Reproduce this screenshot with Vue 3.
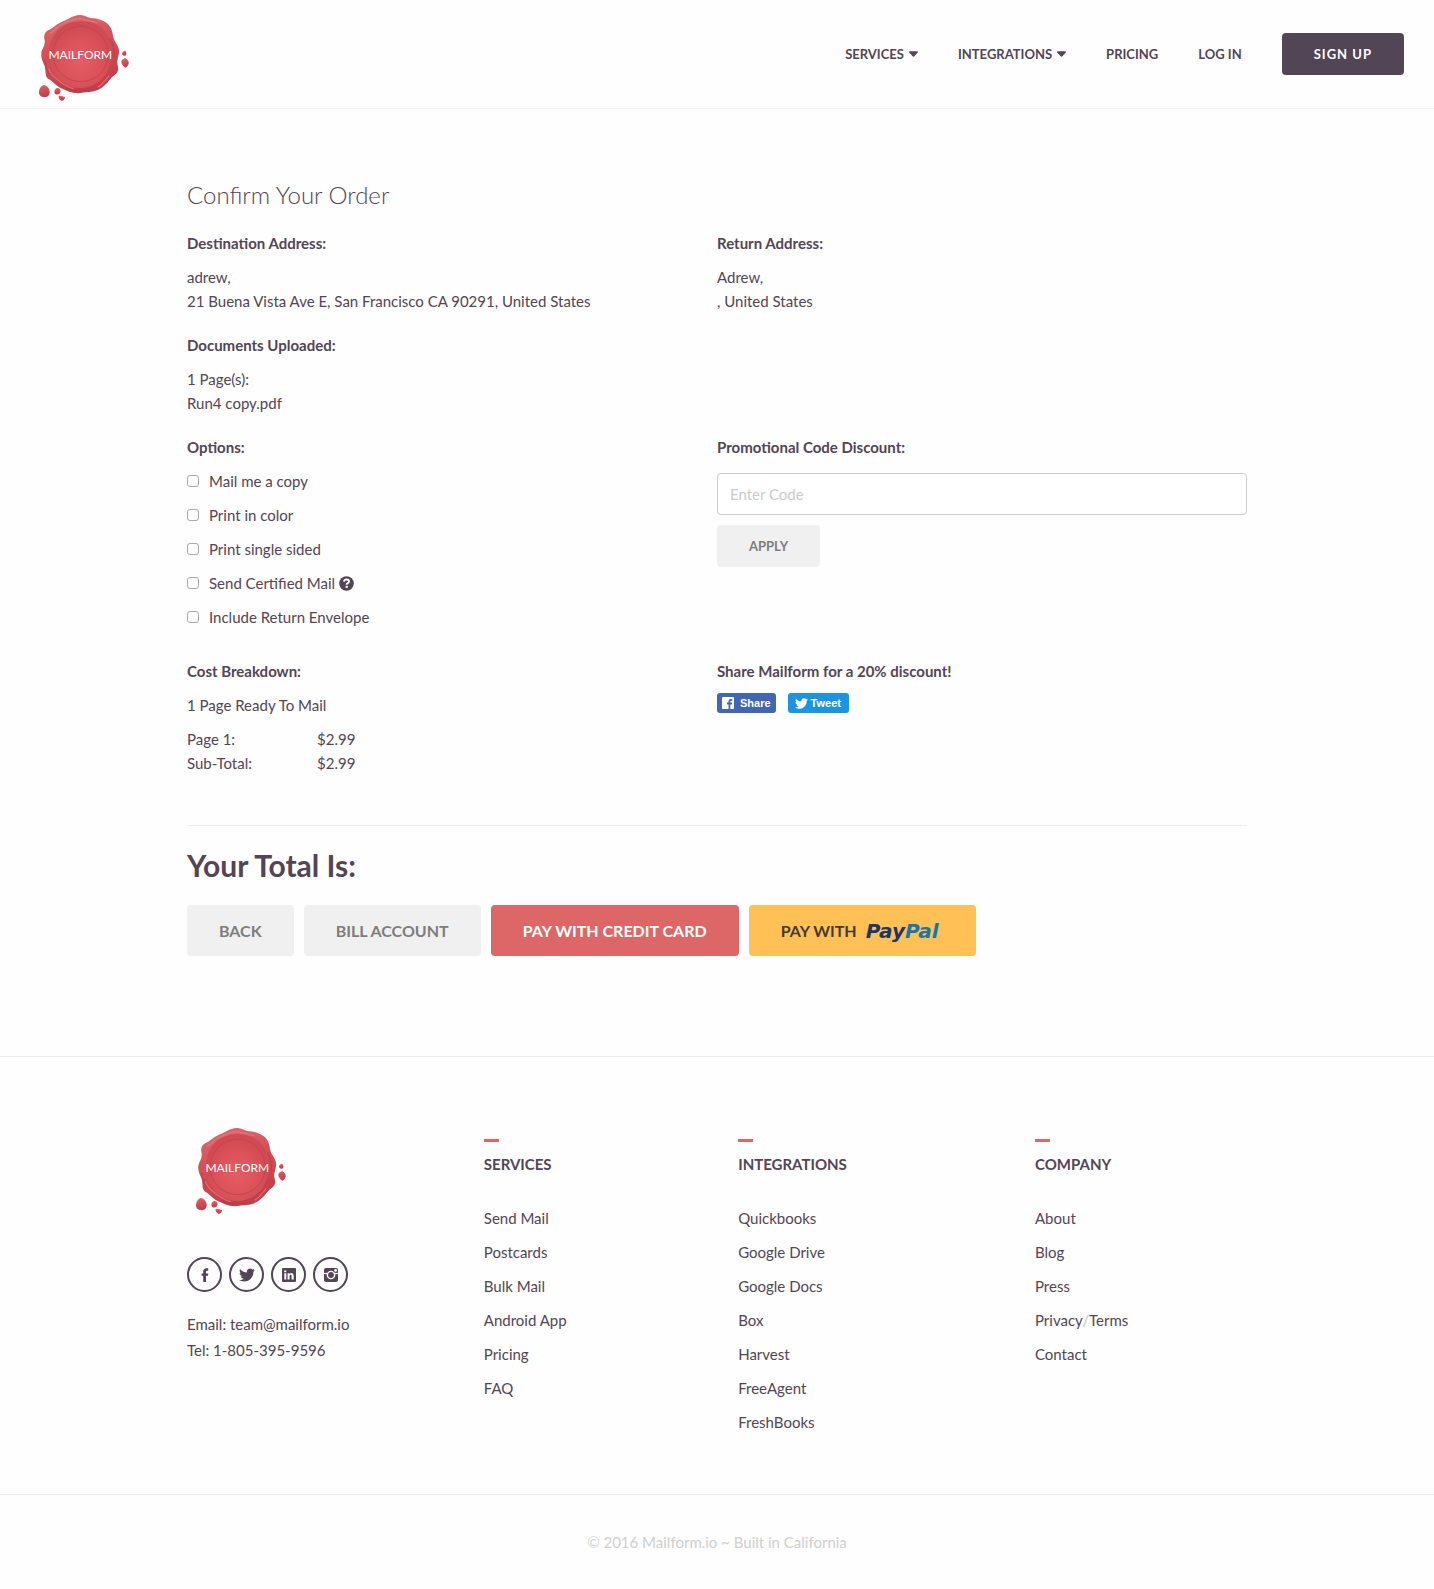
<script setup>
import { ref } from 'vue'

const code = ref('')
const options = ref([
  { id: 'copy', label: 'Mail me a copy', checked: false },
  { id: 'color', label: 'Print in color', checked: false },
  { id: 'single', label: 'Print single sided', checked: false },
  { id: 'certified', label: 'Send Certified Mail', checked: false, help: true },
  { id: 'envelope', label: 'Include Return Envelope', checked: false },
])
const costs = [
  { label: 'Page 1:', amount: '$2.99' },
  { label: 'Sub-Total:', amount: '$2.99' },
]
const menus = [
  { title: 'Services', links: [['Send Mail'], ['Postcards'], ['Bulk Mail'], ['Android App'], ['Pricing'], ['FAQ']] },
  { title: 'Integrations', links: [['Quickbooks'], ['Google Drive'], ['Google Docs'], ['Box'], ['Harvest'], ['FreeAgent'], ['FreshBooks']] },
  { title: 'Company', links: [['About'], ['Blog'], ['Press'], ['Privacy', 'Terms'], ['Contact']] },
]
const twitterPath =
  'M459.37 151.716c.325 4.548.325 9.097.325 13.645 0 138.72-105.583 298.558-298.558 298.558-59.452 0-114.68-17.219-161.137-47.106 8.447.974 16.568 1.299 25.34 1.299 49.055 0 94.213-16.568 130.274-44.832-46.132-.975-84.792-31.188-98.112-72.772 6.498.974 12.995 1.624 19.818 1.624 9.421 0 18.843-1.3 27.614-3.573-48.081-9.747-84.143-51.98-84.143-102.985v-1.299c13.969 7.797 30.214 12.67 47.431 13.319-28.264-18.843-46.781-51.005-46.781-87.391 0-19.492 5.197-37.36 14.294-52.954 51.655 63.675 129.3 105.258 216.365 109.807-1.624-7.797-2.599-15.918-2.599-24.04 0-57.828 46.782-104.934 104.934-104.934 30.213 0 57.502 12.67 76.67 33.137 23.715-4.548 46.456-13.32 66.599-25.34-7.798 24.366-24.366 44.833-46.132 57.827 21.117-2.273 41.584-8.122 60.426-16.243-14.292 20.791-32.161 39.308-52.628 54.253z'
</script>

<template>
  <div class="page">
    <!-- Seal artwork shared by the header and the footer -->
    <svg class="defs" width="0" height="0" aria-hidden="true">
      <defs>
        <radialGradient id="wax" cx="0.5" cy="0.6" r="0.55">
          <stop offset="0" stop-color="#e65c64" />
          <stop offset="0.6" stop-color="#da525a" />
          <stop offset="1" stop-color="#d04a53" />
        </radialGradient>
        <linearGradient id="rim" x1="0" y1="0" x2="0.3" y2="1">
          <stop offset="0" stop-color="#de6c70" />
          <stop offset="0.5" stop-color="#d54f58" />
          <stop offset="1" stop-color="#c03f4a" />
        </linearGradient>
        <symbol id="seal" viewBox="114 42 276 264">
          <path fill="url(#rim)" d="M238 45C252 43 262 54 280 55C300 57 322 66 330 80C340 94 337 110 345 124C352 136 359 146 357 158C356 170 350 180 352 192C356 206 356 216 345 224C332 232 326 246 314 256C302 268 286 275 268 276C252 276 242 281 226 279C208 278 196 270 182 264C166 256 158 242 144 236C134 228 138 212 134 198C128 184 122 172 124 158C126 146 136 136 134 122C130 106 134 96 146 90C160 84 166 74 180 68C200 60 220 46 238 45Z" />
          <path fill="none" stroke="#e98486" stroke-width="4" opacity="0.6" d="M150 100C164 92 172 78 188 72C208 64 222 56 240 56C258 60 276 64 292 68M146 206C150 224 164 232 176 242C190 252 202 262 222 266M292 262C308 254 316 240 328 226" />
          <path fill="none" stroke="#b53a45" stroke-width="4" opacity="0.5" d="M134 180C136 200 142 216 152 228M190 262C214 274 238 274 262 270M330 116C340 136 346 154 342 172" />
          <path fill="url(#wax)" d="M240 64C270 64 300 72 316 96C328 116 336 138 336 162C336 186 328 206 316 226C298 250 272 264 242 264C212 264 184 250 168 230C152 208 146 188 146 164C146 138 154 114 170 94C188 74 212 64 240 64Z" />
          <circle cx="242" cy="162" r="83" fill="none" stroke="#c4454f" stroke-width="3" />
          <path fill="url(#rim)" d="M132 255C142 257 150 267 149 278C148 289 138 293 128 291C118 289 115 278 118 270C120 262 126 255 132 255Z" />
          <path fill="url(#rim)" d="M172 264C179 264 183 271 181 277C178 284 170 286 165 281C161 276 164 265 172 264Z" />
          <path fill="url(#rim)" d="M176 288C182 285 189 290 195 291C196 297 190 303 184 302C179 300 174 293 176 288Z" />
          <path fill="url(#rim)" d="M374 152C380 154 381 164 376 167C369 168 364 162 367 158C369 155 371 152 374 152Z" />
          <path fill="url(#rim)" d="M375 174C382 178 388 184 386 192C383 198 380 202 376 203C370 199 363 192 364 184C366 177 370 178 375 174Z" />
          <text x="241" y="178" text-anchor="middle" font-family="Lato, sans-serif" font-size="36" font-weight="400" fill="#fff">MAILFORM</text>
        </symbol>
      </defs>
    </svg>

    <header class="topbar">
      <a href="#" class="brand" aria-label="Mailform"><svg class="seal"><use href="#seal" /></svg></a>
      <nav class="nav">
        <a href="#">Services <svg class="caret" viewBox="0 0 10 6"><path d="M0 1Q0 0 1 0H9Q10 0 10 1L6 5.500Q5 6.400 4 5.500Z" /></svg></a>
        <a href="#">Integrations <svg class="caret" viewBox="0 0 10 6"><path d="M0 1Q0 0 1 0H9Q10 0 10 1L6 5.500Q5 6.400 4 5.500Z" /></svg></a>
        <a href="#">Pricing</a>
        <a href="#">Log in</a>
        <a href="#" class="signup">Sign up</a>
      </nav>
    </header>

    <main class="wrap order">
      <h1>Confirm Your Order</h1>
      <div class="row">
        <section>
          <h2>Destination Address:</h2>
          <p>adrew,<br>21 Buena Vista Ave E, San Francisco CA 90291, United States</p>
        </section>
        <section>
          <h2>Return Address:</h2>
          <p>Adrew,<br>, United States</p>
        </section>
      </div>
      <div class="row">
        <section>
          <h2>Documents Uploaded:</h2>
          <p>1 Page(s):<br>Run4 copy.pdf</p>
        </section>
      </div>
      <div class="row options">
        <section>
          <h2>Options:</h2>
          <div v-for="o in options" :key="o.id" class="option">
            <input :id="o.id" v-model="o.checked" type="checkbox">
            <label :for="o.id">{{ o.label }}</label>
            <svg v-if="o.help" class="help" viewBox="0 0 15 15">
              <circle cx="7.500" cy="7.500" r="7.300" fill="#524556" />
              <path d="M5 5.600Q5.200 3.500 7.600 3.500Q10 3.500 10 5.500Q10 6.600 8.700 7.200Q7.700 7.700 7.700 8.700" fill="none" stroke="#fff" stroke-width="1.900" />
              <rect x="6.600" y="9.800" width="2.200" height="2" fill="#fff" />
            </svg>
          </div>
        </section>
        <section>
          <h2><label for="promo">Promotional Code Discount:</label></h2>
          <input id="promo" v-model="code" class="promo" type="text" placeholder="Enter Code">
          <button type="button" class="btn apply">Apply</button>
        </section>
      </div>
      <div class="row costs">
        <section>
          <h2>Cost Breakdown:</h2>
          <p>1 Page Ready To Mail</p>
          <table>
            <tbody>
              <tr v-for="c in costs" :key="c.label">
                <th scope="row">{{ c.label }}</th>
                <td>{{ c.amount }}</td>
              </tr>
            </tbody>
          </table>
        </section>
        <section>
          <h2>Share Mailform for a 20% discount!</h2>
          <div class="share">
            <button type="button" class="fb">
              <svg width="12" height="12" viewBox="0 0 12 12"><path fill="#fff" fill-rule="evenodd" d="M1 0H11Q12 0 12 1V11Q12 12 11 12H8.300V7.400H9.900L10.100 5.600H8.300V4.500Q8.300 3.700 9.100 3.700H10.200V2.100H8.600Q6.500 2.100 6.500 4.200V5.600H5V7.400H6.500V12H1Q0 12 0 11V1Q0 0 1 0Z" /></svg>
              <span>Share</span>
            </button>
            <button type="button" class="tw">
              <svg width="13" height="13" viewBox="0 0 512 512"><path fill="#fff" :d="twitterPath" /></svg>
              <span>Tweet</span>
            </button>
          </div>
        </section>
      </div>
      <hr>
      <h3>Your Total Is:</h3>
      <div class="pay">
        <button type="button" class="btn">Back</button>
        <button type="button" class="btn">Bill account</button>
        <button type="button" class="btn card">Pay with credit card</button>
        <button type="button" class="btn paypal">Pay with <span class="pp"><span class="navy">Pay</span><span class="blue">Pal</span></span></button>
      </div>
    </main>

    <footer>
      <div class="wrap foot">
        <div class="about">
          <a href="#" class="brand" aria-label="Mailform"><svg class="seal"><use href="#seal" /></svg></a>
          <div class="social">
            <a href="#" aria-label="Facebook"><svg width="14" height="14" viewBox="0 0 14 14"><path d="M5.200 14V7.800H3.500V5.400H5.200V3.800Q5.200 0.300 8.600 0.300H10.200V2.700H9Q8 2.700 8 3.800V5.400H10.300L9.900 7.800H8V14Z" /></svg></a>
            <a href="#" aria-label="Twitter"><svg width="16" height="16" viewBox="0 0 512 512"><path :d="twitterPath" /></svg></a>
            <a href="#" aria-label="LinkedIn"><svg width="14" height="14" viewBox="0 0 14 14"><path fill-rule="evenodd" d="M1 0H13Q14 0 14 1V13Q14 14 13 14H1Q0 14 0 13V1Q0 0 1 0ZM2.300 5.300V11.500H4.300V5.300ZM2.200 2.400V4.300H4.300V2.400ZM5.600 5.300V11.500H7.600V8Q7.700 6.800 8.600 6.800Q9.600 6.800 9.600 8V11.500H11.700V7.700Q11.600 5.100 9.400 5.100Q8.100 5.100 7.500 6V5.300Z" /></svg></a>
            <a href="#" aria-label="Instagram"><svg width="14" height="14" viewBox="0 0 14 14"><rect width="14" height="14" rx="2" /><path stroke="#fff" stroke-width="1.200" d="M0 5.500H14" /><circle cx="7" cy="7" r="3.600" fill="#524556" stroke="#fff" stroke-width="1.400" /><circle cx="11.600" cy="2.400" r="1.400" fill="#fff" /></svg></a>
          </div>
          <p class="contact">Email: team@mailform.io<br>Tel: 1-805-395-9596</p>
        </div>
        <nav v-for="m in menus" :key="m.title" class="menu" :aria-label="m.title">
          <h4>{{ m.title }}</h4>
          <ul>
            <li v-for="l in m.links" :key="l[0]"><a href="#">{{ l[0] }}</a><template v-if="l[1]"><span class="slash">/</span><a href="#">{{ l[1] }}</a></template></li>
          </ul>
        </nav>
      </div>
      <p class="copyright">© 2016 Mailform.io ~ Built in California</p>
    </footer>
  </div>
</template>

<style>
body {
  margin: 0;
  background: #fefefe;
}
</style>

<style scoped>
.page {
  font: 15px/24px Lato, sans-serif;
  color: #524556;
}
.page * {
  box-sizing: border-box;
}
.defs {
  display: block;
}
a {
  color: inherit;
  text-decoration: none;
}
h1, h2, h3, h4, p, ul {
  margin: 0;
  padding: 0;
}
ul {
  list-style: none;
}
button, input {
  font: inherit;
  margin: 0;
}
.brand {
  display: block;
}
.seal {
  display: block;
  width: 92px;
  height: 88px;
}
.topbar {
  display: flex;
  align-items: flex-start;
  justify-content: space-between;
  height: 109px;
  padding: 14px 30px 0 38px;
  border-bottom: 1px solid #f2f2f2;
}
.nav {
  display: flex;
  align-items: center;
  gap: 40px;
  margin-top: 19px;
  font-size: 13px;
  font-weight: 700;
  text-transform: uppercase;
}
.nav a {
  display: flex;
  align-items: center;
  gap: 5px;
}
.caret {
  width: 9px;
  height: 6px;
  fill: #524556;
}
.nav .signup {
  height: 42px;
  padding: 0 32px;
  border-radius: 4px;
  background: #524556;
  color: #fff;
  letter-spacing: 1px;
}
.wrap {
  max-width: 1060px;
  margin: 0 auto;
}
.order {
  padding: 70px 0 100px;
}
h1 {
  margin-bottom: 20px;
  font-size: 24px;
  line-height: 32px;
  font-weight: 300;
}
h2 {
  margin-bottom: 10px;
  font-size: 15px;
  font-weight: 700;
}
.row {
  display: grid;
  grid-template-columns: 1fr 1fr;
  margin-bottom: 20px;
}
.options {
  margin-bottom: 30px;
}
.option {
  display: flex;
  align-items: center;
  margin-bottom: 10px;
}
.option:last-child {
  margin-bottom: 0;
}
.option input {
  appearance: none;
  width: 12px;
  height: 12px;
  margin-right: 10px;
  border: 1px solid #a9a9a9;
  border-radius: 3px;
  background: #fff;
}
.option input:checked {
  background: #524556;
}
.help {
  width: 15px;
  height: 15px;
  margin-left: 4px;
}
.promo {
  display: block;
  width: 100%;
  height: 42px;
  margin: 14px 0 10px;
  padding: 0 12px;
  border: 1px solid #ccc;
  border-radius: 4px;
  background: #fff;
  color: #524556;
}
.promo::placeholder {
  color: #ccc;
  opacity: 1;
}
.btn {
  height: 51px;
  padding: 0 32px;
  border: 0;
  border-radius: 4px;
  background: #f0f0f0;
  color: #7d7d7d;
  font-size: 16px;
  font-weight: 700;
  text-transform: uppercase;
}
.apply {
  height: 42px;
  font-size: 13px;
}
.costs {
  margin-bottom: 50px;
}
table {
  margin-top: 10px;
  border-collapse: collapse;
}
th, td {
  padding: 0;
  font-weight: 400;
  text-align: left;
}
th {
  width: 130px;
}
.share {
  display: flex;
  gap: 12px;
}
.share button {
  display: flex;
  align-items: center;
  height: 20px;
  padding: 0 5px;
  border: 0;
  border-radius: 3px;
  color: #fff;
  font: 700 11px/20px "Liberation Sans", sans-serif;
}
.share .fb {
  gap: 6px;
  background: #4267b2;
}
.share .tw {
  gap: 3px;
  padding: 0 8px 0 7px;
  background: #1b95e0;
}
hr {
  height: 1px;
  margin: 0 0 19px;
  border: 0;
  background: #ededed;
}
h3 {
  margin-bottom: 20px;
  font-size: 30px;
  line-height: 40px;
  font-weight: 700;
}
.pay {
  display: flex;
  gap: 10px;
}
.card {
  background: #dd6767;
  color: #fff;
}
.paypal {
  display: flex;
  align-items: center;
  gap: 9px;
  padding-right: 37px;
  background: #ffc155;
  color: #443a30;
}
.pp {
  font: italic 700 20px/24px "DejaVu Sans", sans-serif;
  text-transform: none;
}
.navy {
  color: #1b3668;
}
.blue {
  color: #1a76a8;
}
footer {
  border-top: 1px solid #ededed;
}
.foot {
  display: grid;
  grid-template-columns: 28% 24% 28% 20%;
  padding: 70px 0 60px;
}
.about .seal {
  margin-left: 8px;
}
.social {
  display: flex;
  gap: 7px;
  margin: 42px 0 19px;
}
.social a {
  display: flex;
  align-items: center;
  justify-content: center;
  width: 35px;
  height: 35px;
  border: 2px solid #524556;
  border-radius: 50%;
}
.social svg {
  fill: #524556;
}
.contact {
  line-height: 26px;
}
.menu {
  padding-top: 12px;
}
h4 {
  margin-bottom: 30px;
  font-size: 15px;
  font-weight: 700;
  text-transform: uppercase;
}
h4::before {
  content: "";
  display: block;
  width: 15px;
  height: 3px;
  margin-bottom: 10px;
  background: #dd6767;
}
.menu li {
  margin-bottom: 10px;
}
.menu li:last-child {
  margin-bottom: 0;
}
.slash {
  color: #c4c4c4;
}
.copyright {
  padding: 35px 0;
  border-top: 1px solid #ededed;
  color: #d0d0d0;
  text-align: center;
}
</style>
